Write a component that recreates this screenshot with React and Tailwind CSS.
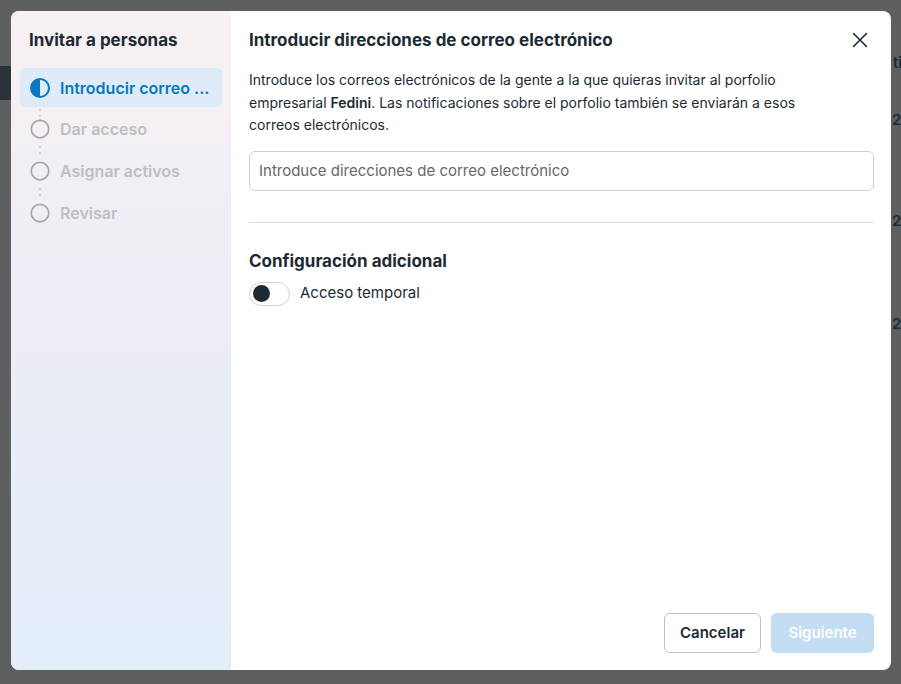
import React from "react";

const font = { fontFamily: "Inter, 'Noto Sans', Roboto, sans-serif" };

function HalfCircle() {
  return (
    <svg width="20" height="20" viewBox="0 0 20 20" className="shrink-0">
      <circle cx="10" cy="10" r="9" fill="none" stroke="#0a78be" strokeWidth="2" />
      <path d="M10 1 A9 9 0 0 0 10 19 Z" fill="#0a78be" />
    </svg>
  );
}

function EmptyCircle() {
  return (
    <svg width="20" height="20" viewBox="0 0 20 20" className="shrink-0">
      <circle cx="10" cy="10" r="8.75" fill="none" stroke="#a4a8ad" strokeWidth="1.75" />
    </svg>
  );
}

function Dots() {
  return (
    <div className="flex flex-col items-center gap-[4px] w-[20px] py-[3px]">
      <span className="w-[2px] h-[2px] rounded-full bg-[#c9ccd0]" />
      <span className="w-[2px] h-[2px] rounded-full bg-[#c9ccd0]" />
    </div>
  );
}

function Step({ label }) {
  return (
    <div className="flex items-center gap-[10px] h-[20px]">
      <EmptyCircle />
      <span className="text-[16px] font-semibold text-[#bcc0c4] leading-[20px]">{label}</span>
    </div>
  );
}

export default function App() {
  return (
    <div style={font} className="relative w-[901px] h-[684px] bg-[#5e5f61] overflow-hidden p-[11px] pb-[14px] pr-[10px]">
      {/* faint page behind overlay */}
      <div className="absolute left-[893px] top-[55px] text-[15px] font-semibold text-[#1e2a33] leading-none">ti</div>
      <div className="absolute left-[892px] top-[112px] text-[15px] font-semibold text-[#1e2a33] leading-none">2</div>
      <div className="absolute left-[892px] top-[213px] text-[15px] font-semibold text-[#1e2a33] leading-none">2</div>
      <div className="absolute left-[892px] top-[316px] text-[15px] font-semibold text-[#1e2a33] leading-none">2</div>
      <div className="absolute left-0 top-[66px] w-[11px] h-[34px] bg-[#2c3237]" />

      <div className="relative flex h-full w-full rounded-[8px] bg-white overflow-hidden">
        {/* Sidebar */}
        <aside className="w-[220px] shrink-0 bg-gradient-to-b from-[#f8f1f3] via-[#ecedf6] to-[#e3eef9] flex flex-col pt-[19px] px-[9px]">
          <h2 className="pl-[9px] text-[17px] font-bold text-[#1c2b33] leading-[20px] mb-[18px]">Invitar a personas</h2>
          <div className="flex items-center gap-[10px] h-[39px] rounded-[5px] bg-[#deebf8] pl-[10px] pr-[6px]">
            <HalfCircle />
            <span className="text-[16px] font-semibold text-[#0a78be] whitespace-nowrap">Introducir correo ...</span>
          </div>
          <div className="pl-[10px] flex flex-col">
            <div className="h-[12px] flex items-center"><Dots /></div>
            <Step label="Dar acceso" />
            <div className="h-[22px] flex items-center"><Dots /></div>
            <Step label="Asignar activos" />
            <div className="h-[22px] flex items-center"><Dots /></div>
            <Step label="Revisar" />
          </div>
        </aside>

        {/* Main */}
        <main className="flex-1 flex flex-col pl-[18px] pr-[17px] pt-[19px] pb-[17px] text-[#1c2b33]">
          <div className="flex items-start justify-between">
            <h1 className="text-[17px] font-bold leading-[20px]">Introducir direcciones de correo electrónico</h1>
            <button className="mt-[-1px] mr-[3px]" aria-label="Cerrar">
              <svg width="22" height="22" viewBox="0 0 22 22">
                <path d="M4.5 4.5 L17.5 17.5 M17.5 4.5 L4.5 17.5" stroke="#1c2b33" strokeWidth="1.6" strokeLinecap="round" />
              </svg>
            </button>
          </div>
          <p className="mt-[18px] text-[14px] leading-[22.5px] pr-[10px]">
            Introduce los correos electrónicos de la gente a la que quieras invitar al porfolio<br />empresarial <span className="font-semibold">Fedini</span>. Las notificaciones sobre el porfolio también se enviarán a esos<br />correos electrónicos.
          </p>
          <div className="mt-[14px] h-[40px] rounded-[6px] border border-[#ced0d4] flex items-center px-[9px] pt-[2px]">
            <span className="text-[15px] text-[#65676b]">Introduce direcciones de correo electrónico</span>
          </div>
          <div className="mt-[31px] h-px bg-[#dadde1]" />
          <h3 className="mt-[28px] text-[17px] font-bold leading-[20px]">Configuración adicional</h3>
          <div className="mt-[11px] flex items-center gap-[10px]">
            <div className="w-[41px] h-[24px] rounded-full border border-[#ced0d4] bg-white flex items-center px-[3px]">
              <span className="w-[17px] h-[17px] rounded-full bg-[#1c2b33]" />
            </div>
            <span className="text-[15px]">Acceso temporal</span>
          </div>
          <div className="mt-auto flex justify-end gap-[10px]">
            <button className="w-[97px] h-[40px] rounded-[6px] border border-[#bcc0c4] bg-white text-[15px] font-semibold text-[#1c2b33]">Cancelar</button>
            <button className="w-[103px] h-[40px] rounded-[6px] bg-[#c3ddf4] text-[15px] font-semibold text-white">Siguiente</button>
          </div>
        </main>
      </div>
    </div>
  );
}
